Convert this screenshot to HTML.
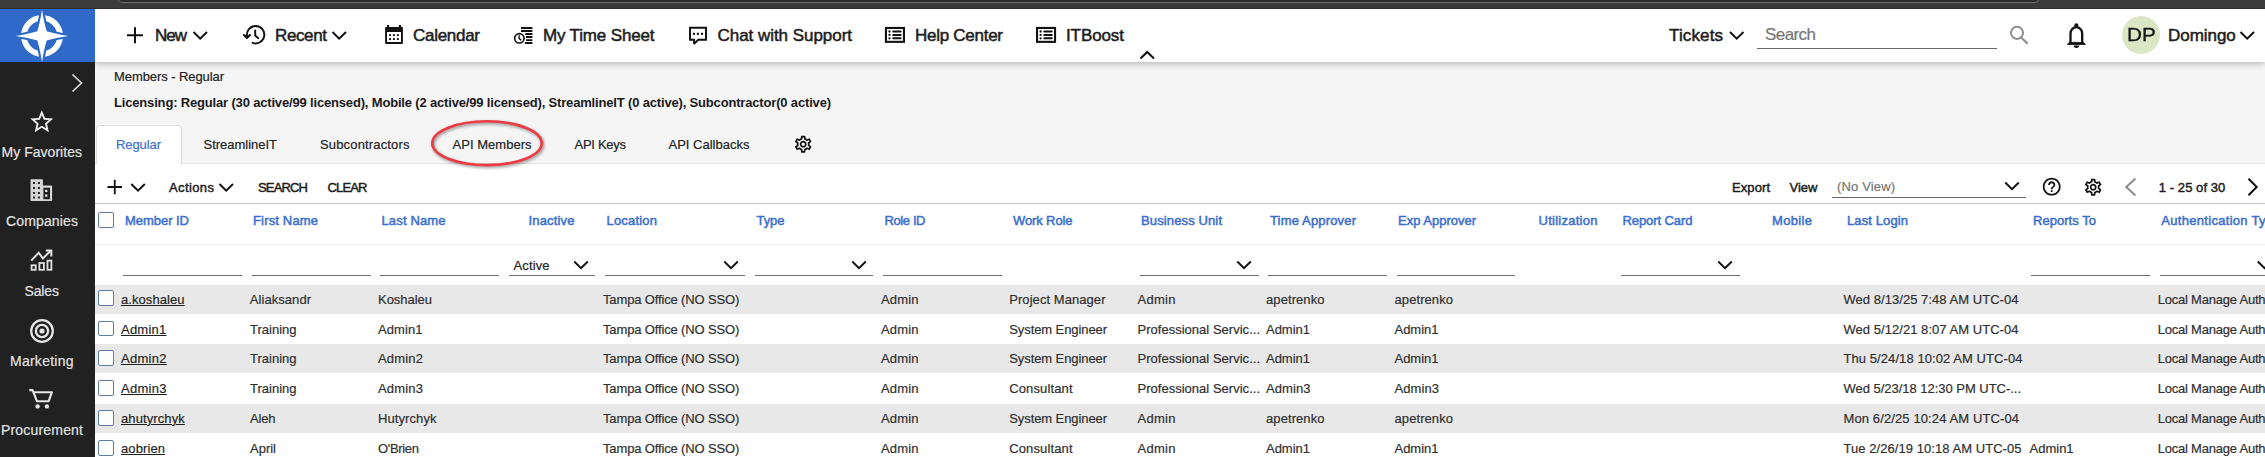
<!DOCTYPE html>
<html lang="en"><head><meta charset="utf-8"><title>Members - Regular</title>
<style>
*{box-sizing:border-box;margin:0;padding:0}
html,body{width:2265px;height:457px;overflow:hidden;background:#f5f5f5}
body{position:relative;font-family:"Liberation Sans",Arial,sans-serif;font-size:13px;color:#212121}
.a{position:absolute}
.t{position:absolute;white-space:nowrap;line-height:20px}
.browser{left:0;top:0;width:2265px;height:8.800px;background:#3b3b3b;border-bottom:1px solid #2e2e2e;z-index:5}
.urlbar{left:115.500px;top:-11.300px;width:1925px;height:14px;border:1.400px solid #6e6e6e;border-radius:10px;background:#2d2d2d;z-index:6}
.logo{left:0;top:8.800px;width:95px;height:53.200px;background:#2f6ac8}
.side{left:0;top:62px;width:95px;height:395px;background:#212121}
.hdr{left:95px;top:8.800px;width:2170px;height:53.200px;background:#fff;box-shadow:0 2px 6px rgba(0,0,0,.24)}
.tabline{left:95px;top:162.5px;width:2170px;height:1.5px;background:#e2e2e2}
.tab{left:95.7px;top:124.7px;width:86.200px;height:39.300px;background:#fff;border:1px solid #dcdcdc;border-bottom:0;border-radius:4px 4px 0 0}
.panel{left:95px;top:164px;width:2170px;height:293px;background:#fff}
.tbline{left:95px;top:203px;width:2170px;height:1px;background:#c4c4c4}
.hline{left:95px;top:244px;width:2170px;height:1px;background:#f0f0f0}
.row{left:95px;width:2170px;background:#e8e8e8}
.u{height:1px;background:#6e6e6e;top:274.6px}
.cb{width:15.6px;height:15.6px;left:98.3px;border:1.8px solid #5b7ea4;border-radius:2px;background:#fff}
svg{position:absolute;overflow:hidden}
.avatar{left:2122px;top:16px;width:38px;height:38px;border-radius:50%;background:#dbe7c4}
.sunder{left:1757px;top:47.500px;width:240px;height:1px;background:#666}
.vunder{left:1832px;top:196.500px;width:194px;height:1px;background:#666}

</style></head>
<body>
<div class="a browser"></div>
<div class="a urlbar"></div>
<div class="a panel"></div>
<div class="a tabline"></div>
<div class="a tab"></div>
<div class="a tbline"></div>
<div class="a hline"></div>
<div class="a row" style="top:284.6px;height:29.6px"></div>
<div class="a row" style="top:344px;height:29.2px"></div>
<div class="a row" style="top:403.6px;height:29.6px"></div>
<div class="a hdr"></div>
<div class="a side"></div>
<div class="a logo"></div>
<!-- logo -->
<svg style="left:0;top:8.500px" width="95" height="53.500" viewBox="0 8.500 95 53.500">
  <circle cx="42" cy="35.400" r="18.050" fill="none" stroke="#fff" stroke-width="5.700"/>
  <path d="M42.00 9.00Q43.90 21.90 46.70 30.70Q55.50 33.50 68.40 35.40Q55.50 37.30 46.70 40.10Q43.90 48.90 42.00 61.80Q40.10 48.90 37.30 40.10Q28.50 37.30 15.60 35.40Q28.50 33.50 37.30 30.70Q40.10 21.90 42.00 9.00Z" fill="#fff" stroke="#2f6ac8" stroke-width="4.200" stroke-linejoin="miter" paint-order="stroke"/>
</svg>
<!-- sidebar icons -->
<svg style="left:0;top:62px" width="95" height="395" viewBox="0 62 95 395" fill="none" stroke="#e6e6e6">
  <polyline points="72.5,74.5 81.5,83 72.5,91.5" stroke-width="1.7" stroke="#dcdcdc"/>
</svg>
<svg style="left:27.7px;top:107.6px" width="27.6" height="27.6" viewBox="0 0 24 24" fill="#f0f0f0"><path d="M22 9.24l-7.19-.62L12 2 9.19 8.63 2 9.24l5.46 4.73L5.82 21 12 17.27 18.18 21l-1.63-7.03L22 9.24zM12 15.4l-3.76 2.27 1-4.28-3.32-2.88 4.38-.38L12 6.1l1.71 4.04 4.38.38-3.32 2.88 1 4.28L12 15.4z"/></svg>
<svg style="left:0;top:170px" width="95" height="40" viewBox="0 170 95 40">
  <path d="M31.300 179.200H42.100Q42.900 179.200 42.900 180V185.500H51.300Q52.100 185.500 52.100 186.300V200.200Q52.100 201 51.300 201H31.300Q30.500 201 30.500 200.200V180Q30.500 179.200 31.300 179.200ZM43.400 187.700V199.200H50V187.700ZM33.05 182.00h2v2h-2ZM33.05 187.00h2v2h-2ZM33.05 191.90h2v2h-2ZM33.05 196.60h2v2h-2ZM37.90 182.00h2v2h-2ZM37.90 187.00h2v2h-2ZM37.90 191.90h2v2h-2ZM37.90 196.60h2v2h-2Z" fill="#d6d6d6" fill-rule="evenodd"/>
  <rect x="45.100" y="189.800" width="2.200" height="2.200" fill="#efefef"/><rect x="45.100" y="194.500" width="2.200" height="2.200" fill="#efefef"/>
</svg>
<!-- sales -->
<svg style="left:0;top:240px" width="95" height="40" viewBox="0 240 95 40" fill="none" stroke="#e2e2e2" stroke-width="1.800">
  <rect x="31.550" y="265.300" width="4.150" height="4.500"/><rect x="39.400" y="263" width="4.500" height="6.800"/><rect x="47.500" y="260.600" width="3.900" height="9.200"/>
  <polyline points="31.200,260.600 38.700,252.700 42.900,258.500 50.700,250.700" stroke-width="2" stroke-linejoin="miter"/>
  <polyline points="45.800,250.500 51.300,250.500 51.300,256.400" stroke-width="2.100"/>
</svg>
<!-- marketing -->
<svg style="left:29.5px;top:318.7px" width="24" height="24" viewBox="0 0 24 24" fill="none" stroke="#e6e6e6">
  <circle cx="12" cy="12" r="10.800" stroke-width="2.200"/><circle cx="12" cy="12" r="6.100" stroke-width="2.300"/><circle cx="12" cy="12" r="2.600" fill="#e6e6e6" stroke="none"/>
</svg>
<!-- cart -->
<svg style="left:0;top:380px" width="95" height="40" viewBox="0 380 95 40" fill="none" stroke="#e6e6e6" stroke-width="2.100">
  <path d="M29.3 390.1H32.6L36.9 401.2H48.7L51.9 392.2H33.6" stroke-linejoin="round"/>
  <circle cx="37.600" cy="406.400" r="2.200" fill="#e6e6e6" stroke="none"/><circle cx="46.900" cy="406.400" r="2.200" fill="#e6e6e6" stroke="none"/>
</svg>

<!-- header icons -->
<svg style="left:0;top:0" width="2265" height="62" viewBox="0 0 2265 62" fill="none" stroke="#111" stroke-width="2">
  <path d="M127 35.200H143M135 27.200V43.200" stroke-width="2"/>
  <polyline points="193.5,32 200.2,38.6 207,32"/>
  <polyline points="332.5,32 339.2,38.6 346,32"/>
  <polyline points="1730,32 1736.7,38.6 1743.5,32"/>
  <polyline points="2240.5,32 2247.2,38.6 2254,32"/>
  <polyline points="1140.5,58.5 1147.2,52 1154,58.5"/>
</svg>
<!-- header drawn icons -->
<svg style="left:0;top:0" width="2265" height="62" viewBox="0 0 2265 62" fill="none" stroke="#111" stroke-linecap="butt">
  <!-- history -->
  <path d="M246.980 35.900A8.700 8.700 0 1 1 252.620 42.880" stroke-width="1.950" stroke-linecap="round"/>
  <polyline points="244,34.900 247,37.900 250,34.900" stroke-width="2.100" stroke-linecap="round" stroke-linejoin="round"/>
  <polyline points="255.200,30.400 255.200,35.600 258.300,38.200" stroke-width="1.950" stroke-linecap="round" stroke-linejoin="round"/>
  <!-- calendar -->
  <path d="M385.1 27.7Q385.1 26.9 385.9 26.9H402.1Q402.9 26.900 402.9 27.700V43.200Q402.9 44 402.100 44H385.900Q385.100 44 385.100 43.200ZM387 32.100V42H401V32.100Z" fill="#111" stroke="none" fill-rule="evenodd"/>
  <path d="M388.1 25V28M400 25V28" stroke-width="2.200"/>
  <g fill="#111" stroke="none"><rect x="389.1" y="34.200" width="1.900" height="1.900"/><rect x="392.950" y="34.200" width="1.900" height="1.900"/><rect x="396.900" y="34.200" width="1.900" height="1.900"/>
  <rect x="389.1" y="38.100" width="1.900" height="1.900"/><rect x="392.950" y="38.100" width="1.900" height="1.900"/><rect x="396.900" y="38.100" width="1.900" height="1.900"/></g>
  <!-- time sheet -->
  <path d="M521 27.900H532.400M521 31H532.400M525.300 34H532.400M526 37H532.400M526.200 40.100H532.400M524.900 43H532.400" stroke-width="1.950"/>
  <circle cx="519.350" cy="38.300" r="4.700" stroke-width="1.650" fill="#fff"/>
  <polyline points="519.100,35.800 519.100,38.500 520.800,39.900" stroke-width="1.400" stroke-linecap="round"/>
  <!-- chat -->
  <path d="M690 27.830H706V39.770H698.300L694.100 43.900V39.770H690Z" stroke-width="1.950" stroke-linejoin="miter" stroke-miterlimit="2"/>
  <g fill="#111" stroke="none"><rect x="692.950" y="32.750" width="2.100" height="2.100"/><rect x="696.850" y="32.750" width="2.100" height="2.100"/><rect x="700.950" y="32.750" width="2.100" height="2.100"/></g>
  <!-- help center -->
  <g>
  <rect x="885.950" y="27.950" width="18" height="13.900" stroke-width="2.100"/>
  <path d="M893.200 31.500H900.650M893.200 34.950H900.650M893.200 38.300H900.650" stroke-width="2" stroke-linecap="round"/>
  <g fill="#111" stroke="none"><circle cx="889.500" cy="31.500" r="1.150"/><circle cx="889.500" cy="34.950" r="1.150"/><circle cx="889.500" cy="38.300" r="1.150"/></g>
  </g>
  <g transform="translate(151.100 0)">
  <rect x="885.950" y="27.950" width="18" height="13.900" stroke-width="2.100"/>
  <path d="M893.200 31.500H900.650M893.200 34.950H900.650M893.200 38.300H900.650" stroke-width="2" stroke-linecap="round"/>
  <g fill="#111" stroke="none"><circle cx="889.500" cy="31.500" r="1.150"/><circle cx="889.500" cy="34.950" r="1.150"/><circle cx="889.500" cy="38.300" r="1.150"/></g>
  </g>
  
  <!-- search magnifier -->
  <circle cx="2017" cy="32.850" r="6.050" stroke="#8c8c8c" stroke-width="1.950"/>
  <path d="M2021.500 37.800L2027.200 43.300" stroke="#8c8c8c" stroke-width="2" stroke-linecap="round"/>
  <!-- bell -->
  <path d="M2070.500 43V33.700A5.850 6.500 0 0 1 2082.200 33.700V43" stroke-width="2.300"/>
  <path d="M2067.300 44.400L2069.400 42.400H2083.300L2085.400 44.400Z" fill="#111" stroke-width="0.900" stroke-linejoin="round"/>
  <circle cx="2076.350" cy="25.400" r="2.050" fill="#111" stroke="none"/>
  <path d="M2073.500 45.600A2.850 2.500 0 0 0 2079.200 45.600Z" fill="#111" stroke="none"/>
</svg>
<div class="a sunder"></div>
<div class="a avatar"></div>

<!-- tabs gear -->
<svg style="left:792.800px;top:134px" width="20.400" height="20.400" viewBox="0 0 24 24" fill="#111"><path d="M19.430 12.980c.04-.32.070-.64.070-.98 0-.34-.03-.66-.07-.98l2.110-1.650c.19-.15.240-.42.120-.64l-2-3.460c-.09-.16-.26-.25-.44-.25-.06 0-.12.010-.17.030l-2.490 1c-.52-.4-1.080-.73-1.690-.98l-.38-2.650C14.460 2.180 14.250 2 14 2h-4c-.25 0-.46.180-.49.420l-.38 2.650c-.61.250-1.170.59-1.690.98l-2.490-1c-.06-.02-.12-.03-.18-.03-.17 0-.34.090-.43.250l-2 3.460c-.13.220-.07.490.12.640l2.110 1.650c-.04.320-.07.650-.07.980 0 .33.030.66.070.98l-2.110 1.650c-.19.150-.24.420-.12.640l2 3.460c.09.160.26.250.44.250.06 0 .12-.01.170-.03l2.490-1c.52.400 1.080.73 1.690.98l.38 2.650c.03.240.24.420.49.420h4c.25 0 .46-.18.490-.42l.38-2.650c.61-.25 1.170-.59 1.690-.98l2.490 1c.06.020.12.030.18.030.17 0 .34-.09.430-.25l2-3.460c.12-.22.070-.49-.12-.64l-2.110-1.650zm-1.980-1.710c.04.310.05.520.05.730 0 .21-.02.430-.05.730l-.14 1.130.89.700 1.080.84-.7 1.210-1.270-.51-1.040-.42-.9.680c-.43.320-.84.560-1.250.73l-1.060.43-.16 1.130-.2 1.350h-1.400l-.19-1.350-.16-1.130-1.060-.43c-.43-.18-.83-.41-1.230-.71l-.91-.7-1.060.43-1.270.51-.7-1.210 1.080-.84.890-.7-.14-1.130c-.03-.31-.05-.54-.05-.74s.02-.43.050-.73l.14-1.130-.89-.7-1.080-.84.700-1.210 1.270.51 1.040.42.900-.68c.43-.32.840-.56 1.250-.73l1.060-.43.160-1.130.2-1.350h1.390l.19 1.350.16 1.130 1.060.43c.43.180.83.410 1.230.71l.91.700 1.060-.43 1.270-.51.700 1.210-1.070.85-.89.700.14 1.130zM12 8c-2.210 0-4 1.790-4 4s1.790 4 4 4 4-1.790 4-4-1.790-4-4-4zm0 6c-1.100 0-2-.9-2-2s.9-2 2-2 2 .9 2 2-.9 2-2 2z"/></svg>
<!-- red ellipse -->
<svg style="left:420px;top:110px" width="135" height="68" viewBox="420 110 135 68" fill="none">
  <ellipse cx="488.100" cy="144.800" rx="54.700" ry="21.900" stroke="rgba(0,0,0,.42)" stroke-width="2.800" style="filter:blur(1.600px)"/>
  <ellipse cx="487" cy="143.200" rx="54.700" ry="21.900" stroke="#ee3a42" stroke-width="2.600"/>
</svg>

<!-- toolbar icons -->
<svg style="left:95px;top:164px" width="2170" height="40" viewBox="95 164 2170 40" fill="none" stroke="#111" stroke-width="1.950">
  <path d="M107.500 187H122M114.750 179.700V194.300" stroke-width="1.800"/>
  <polyline points="131.300,184 138,190.600 144.800,184"/>
  <polyline points="219.500,184 226.200,190.600 233,184"/>
  <polyline points="2005.300,182.500 2012,189.100 2018.800,182.500"/>
  <polyline points="2135.400,178.600 2126.300,187 2135.400,195.400" stroke="#8c8c8c" stroke-width="2"/>
  <polyline points="2248.500,178.800 2256.700,187 2248.500,195.200" stroke-width="2"/>
</svg>
<div class="a vunder"></div>
<svg style="left:2041.100px;top:175.900px" width="21.400" height="21.400" viewBox="0 0 24 24" fill="#111"><path d="M11 18h2v-2h-2v2zm1-16C6.480 2 2 6.480 2 12s4.480 10 10 10 10-4.480 10-10S17.520 2 12 2zm0 18c-4.410 0-8-3.590-8-8s3.590-8 8-8 8 3.590 8 8-3.590 8-8 8zm0-14c-2.210 0-4 1.790-4 4h2c0-1.100.9-2 2-2s2 .9 2 2c0 2-3 1.750-3 5h2c0-2.250 3-2.500 3-5 0-2.210-1.790-4-4-4z"/></svg>
<svg style="left:2082.800px;top:176.900px" width="20.400" height="20.400" viewBox="0 0 24 24" fill="#111"><path d="M19.430 12.980c.04-.32.070-.64.070-.98 0-.34-.03-.66-.07-.98l2.110-1.650c.19-.15.240-.42.120-.64l-2-3.460c-.09-.16-.26-.25-.44-.25-.06 0-.12.010-.17.030l-2.490 1c-.52-.4-1.080-.73-1.690-.98l-.38-2.650C14.460 2.180 14.250 2 14 2h-4c-.25 0-.46.180-.49.420l-.38 2.650c-.61.250-1.170.59-1.690.98l-2.490-1c-.06-.02-.12-.03-.18-.03-.17 0-.34.090-.43.250l-2 3.460c-.13.220-.07.490.12.640l2.110 1.650c-.04.320-.07.650-.07.980 0 .33.030.66.070.98l-2.110 1.650c-.19.150-.24.420-.12.640l2 3.460c.09.160.26.250.44.250.06 0 .12-.01.170-.03l2.490-1c.52.400 1.080.73 1.690.98l.38 2.650c.03.240.24.420.49.420h4c.25 0 .46-.18.490-.42l.38-2.650c.61-.25 1.170-.59 1.690-.98l2.490 1c.06.020.12.030.18.030.17 0 .34-.09.430-.25l2-3.460c.12-.22.070-.49-.12-.64l-2.110-1.650zm-1.980-1.710c.04.310.05.520.05.730 0 .21-.02.430-.05.730l-.14 1.130.89.700 1.080.84-.7 1.210-1.270-.51-1.040-.42-.9.680c-.43.320-.84.560-1.250.73l-1.060.43-.16 1.130-.2 1.350h-1.400l-.19-1.350-.16-1.130-1.060-.43c-.43-.18-.83-.41-1.230-.71l-.91-.7-1.060.43-1.270.51-.7-1.210 1.080-.84.890-.7-.14-1.130c-.03-.31-.05-.54-.05-.74s.02-.43.050-.73l.14-1.130-.89-.7-1.080-.84.700-1.210 1.270.51 1.040.42.900-.68c.43-.32.840-.56 1.250-.73l1.060-.43.160-1.130.2-1.350h1.390l.19 1.350.16 1.130 1.060.43c.43.180.83.410 1.230.71l.91.700 1.060-.43 1.270-.51.700 1.210-1.070.85-.89.700.14 1.130zM12 8c-2.210 0-4 1.790-4 4s1.790 4 4 4 4-1.790 4-4-1.790-4-4-4zm0 6c-1.100 0-2-.9-2-2s.9-2 2-2 2 .9 2 2-.9 2-2 2z"/></svg>

<!-- filter underlines -->
<div class="a u" style="left:123px;width:119px"></div>
<div class="a u" style="left:252px;width:119px"></div>
<div class="a u" style="left:380px;width:119px"></div>
<div class="a u" style="left:509px;width:86px"></div>
<div class="a u" style="left:605px;width:140px"></div>
<div class="a u" style="left:755px;width:118px"></div>
<div class="a u" style="left:883px;width:119px"></div>
<div class="a u" style="left:1140px;width:119px"></div>
<div class="a u" style="left:1268px;width:119px"></div>
<div class="a u" style="left:1397px;width:118px"></div>
<div class="a u" style="left:1621px;width:119px"></div>
<div class="a u" style="left:2031px;width:119px"></div>
<div class="a u" style="left:2159.800px;width:106px"></div>
<svg style="left:95px;top:245px" width="2170" height="40" viewBox="95 245 2170 40" fill="none" stroke="#111" stroke-width="1.950">
  <polyline points="574.300,261.500 581,268.100 587.800,261.500"/>
  <polyline points="724.300,261.500 731,268.100 737.800,261.500"/>
  <polyline points="852.300,261.500 859,268.100 865.800,261.500"/>
  <polyline points="1237.300,261.500 1244,268.100 1250.800,261.500"/>
  <polyline points="1718.300,261.500 1725,268.100 1731.800,261.500"/>
  <polyline points="2257.800,261.500 2264.500,268.100 2271.300,261.500"/>
  <path d="M1735 205.500H1743.200V212.500Z" fill="#8d9db3" stroke="none"/>
</svg>
<!-- checkboxes -->
<div class="a cb" style="top:212.400px"></div>
<div class="a cb" style="top:290.300px"></div>
<div class="a cb" style="top:320.500px"></div>
<div class="a cb" style="top:350.200px"></div>
<div class="a cb" style="top:380.400px"></div>
<div class="a cb" style="top:410.300px"></div>
<div class="a cb" style="top:440px"></div>
<span class="t" style="left:155.00px;top:25.50px;font-size:17px;color:#1c1c1c;-webkit-text-stroke:0.5px #1c1c1c;letter-spacing:-1.008px;">New</span>
<span class="t" style="left:275.00px;top:25.50px;font-size:17px;color:#1c1c1c;-webkit-text-stroke:0.5px #1c1c1c;letter-spacing:-0.375px;">Recent</span>
<span class="t" style="left:413.00px;top:25.50px;font-size:17px;color:#1c1c1c;-webkit-text-stroke:0.5px #1c1c1c;letter-spacing:-0.286px;">Calendar</span>
<span class="t" style="left:543.00px;top:25.50px;font-size:17px;color:#1c1c1c;-webkit-text-stroke:0.5px #1c1c1c;letter-spacing:-0.156px;">My Time Sheet</span>
<span class="t" style="left:717.50px;top:25.50px;font-size:17px;color:#1c1c1c;-webkit-text-stroke:0.5px #1c1c1c;letter-spacing:-0.040px;">Chat with Support</span>
<span class="t" style="left:915.00px;top:25.50px;font-size:17px;color:#1c1c1c;-webkit-text-stroke:0.5px #1c1c1c;letter-spacing:-0.272px;">Help Center</span>
<span class="t" style="left:1066.00px;top:25.50px;font-size:17px;color:#1c1c1c;-webkit-text-stroke:0.5px #1c1c1c;letter-spacing:-0.099px;">ITBoost</span>
<span class="t" style="left:1669.00px;top:25.50px;font-size:17px;color:#1c1c1c;-webkit-text-stroke:0.5px #1c1c1c;letter-spacing:0.130px;">Tickets</span>
<span class="t" style="left:1765.00px;top:24.50px;font-size:17px;color:#757575;-webkit-text-stroke:0.18px #757575;letter-spacing:-0.575px;">Search</span>
<span class="t" style="left:2127.30px;top:25.00px;font-size:18px;color:#161616;-webkit-text-stroke:0.3px #161616;transform:scaleX(1.1488);transform-origin:0 0;">DP</span>
<span class="t" style="left:2168.00px;top:25.50px;font-size:17px;color:#1c1c1c;-webkit-text-stroke:0.5px #1c1c1c;letter-spacing:-0.049px;">Domingo</span>
<span class="t" style="left:114.00px;top:66.50px;font-size:13px;color:#212121;-webkit-text-stroke:0.18px #212121;letter-spacing:-0.079px;">Members - Regular</span>
<span class="t" style="left:114.00px;top:92.50px;font-size:13px;color:#1a1a1a;font-weight:bold;letter-spacing:-0.169px;">Licensing: Regular (30 active/99 licensed), Mobile (2 active/99 licensed), StreamlineIT (0 active), Subcontractor(0 active)</span>
<span class="t" style="left:116.00px;top:134.50px;font-size:13px;color:#3b6fcf;-webkit-text-stroke:0.18px #3b6fcf;letter-spacing:-0.089px;">Regular</span>
<span class="t" style="left:203.50px;top:134.50px;font-size:13px;color:#212121;-webkit-text-stroke:0.18px #212121;letter-spacing:-0.018px;">StreamlineIT</span>
<span class="t" style="left:320.00px;top:134.50px;font-size:13px;color:#212121;-webkit-text-stroke:0.18px #212121;letter-spacing:0.159px;">Subcontractors</span>
<span class="t" style="left:452.50px;top:134.50px;font-size:13px;color:#212121;-webkit-text-stroke:0.18px #212121;letter-spacing:0.025px;">API Members</span>
<span class="t" style="left:574.50px;top:134.50px;font-size:13px;color:#212121;-webkit-text-stroke:0.18px #212121;letter-spacing:-0.281px;">API Keys</span>
<span class="t" style="left:668.50px;top:134.50px;font-size:13px;color:#212121;-webkit-text-stroke:0.18px #212121;letter-spacing:0.007px;">API Callbacks</span>
<span class="t" style="left:169.00px;top:177.50px;font-size:13px;color:#1c1c1c;-webkit-text-stroke:0.45px #1c1c1c;letter-spacing:0.393px;">Actions</span>
<span class="t" style="left:258.00px;top:177.50px;font-size:13px;color:#1c1c1c;-webkit-text-stroke:0.45px #1c1c1c;letter-spacing:-0.838px;">SEARCH</span>
<span class="t" style="left:327.50px;top:177.50px;font-size:13px;color:#1c1c1c;-webkit-text-stroke:0.45px #1c1c1c;letter-spacing:-0.840px;">CLEAR</span>
<span class="t" style="left:1732.00px;top:177.50px;font-size:13px;color:#1c1c1c;-webkit-text-stroke:0.45px #1c1c1c;letter-spacing:0.084px;">Export</span>
<span class="t" style="left:1789.50px;top:177.50px;font-size:13px;color:#1c1c1c;-webkit-text-stroke:0.45px #1c1c1c;letter-spacing:0.016px;">View</span>
<span class="t" style="left:2158.80px;top:177.50px;font-size:13px;color:#1c1c1c;-webkit-text-stroke:0.45px #1c1c1c;letter-spacing:0.065px;">1 - 25 of 30</span>
<span class="t" style="left:1837.00px;top:176.50px;font-size:13px;color:#757575;-webkit-text-stroke:0.18px #757575;letter-spacing:0.145px;">(No View)</span>
<span class="t" style="left:125.00px;top:210.50px;font-size:13px;color:#3b6fcf;-webkit-text-stroke:0.5px #3b6fcf;letter-spacing:-0.037px;">Member ID</span>
<span class="t" style="left:253.00px;top:210.50px;font-size:13px;color:#3b6fcf;-webkit-text-stroke:0.5px #3b6fcf;letter-spacing:0.160px;">First Name</span>
<span class="t" style="left:381.50px;top:210.50px;font-size:13px;color:#3b6fcf;-webkit-text-stroke:0.5px #3b6fcf;letter-spacing:0.141px;">Last Name</span>
<span class="t" style="left:528.50px;top:210.50px;font-size:13px;color:#3b6fcf;-webkit-text-stroke:0.5px #3b6fcf;letter-spacing:0.170px;">Inactive</span>
<span class="t" style="left:606.50px;top:210.50px;font-size:13px;color:#3b6fcf;-webkit-text-stroke:0.5px #3b6fcf;letter-spacing:0.192px;">Location</span>
<span class="t" style="left:756.50px;top:210.50px;font-size:13px;color:#3b6fcf;-webkit-text-stroke:0.5px #3b6fcf;letter-spacing:-0.062px;">Type</span>
<span class="t" style="left:884.50px;top:210.50px;font-size:13px;color:#3b6fcf;-webkit-text-stroke:0.5px #3b6fcf;letter-spacing:-0.393px;">Role ID</span>
<span class="t" style="left:1013.00px;top:210.50px;font-size:13px;color:#3b6fcf;-webkit-text-stroke:0.5px #3b6fcf;letter-spacing:-0.119px;">Work Role</span>
<span class="t" style="left:1141.00px;top:210.50px;font-size:13px;color:#3b6fcf;-webkit-text-stroke:0.5px #3b6fcf;letter-spacing:0.126px;">Business Unit</span>
<span class="t" style="left:1270.00px;top:210.50px;font-size:13px;color:#3b6fcf;-webkit-text-stroke:0.5px #3b6fcf;letter-spacing:0.161px;">Time Approver</span>
<span class="t" style="left:1398.00px;top:210.50px;font-size:13px;color:#3b6fcf;-webkit-text-stroke:0.5px #3b6fcf;letter-spacing:-0.004px;">Exp Approver</span>
<span class="t" style="left:1538.50px;top:210.50px;font-size:13px;color:#3b6fcf;-webkit-text-stroke:0.5px #3b6fcf;letter-spacing:0.264px;">Utilization</span>
<span class="t" style="left:1622.50px;top:210.50px;font-size:13px;color:#3b6fcf;-webkit-text-stroke:0.5px #3b6fcf;letter-spacing:-0.081px;">Report Card</span>
<span class="t" style="left:1772.00px;top:210.50px;font-size:13px;color:#3b6fcf;-webkit-text-stroke:0.5px #3b6fcf;letter-spacing:0.341px;">Mobile</span>
<span class="t" style="left:1847.00px;top:210.50px;font-size:13px;color:#3b6fcf;-webkit-text-stroke:0.5px #3b6fcf;letter-spacing:0.111px;">Last Login</span>
<span class="t" style="left:2033.00px;top:210.50px;font-size:13px;color:#3b6fcf;-webkit-text-stroke:0.5px #3b6fcf;letter-spacing:0.040px;">Reports To</span>
<span class="t" style="left:2161.30px;top:210.50px;font-size:13px;color:#3b6fcf;-webkit-text-stroke:0.5px #3b6fcf;letter-spacing:0.300px;">Authentication Type</span>
<span class="t" style="left:513.50px;top:255.50px;font-size:13px;color:#212121;-webkit-text-stroke:0.18px #212121;letter-spacing:0.119px;">Active</span>
<span class="t" style="left:1.50px;top:142.00px;font-size:14px;color:#e4e4e4;-webkit-text-stroke:0.18px #e4e4e4;letter-spacing:0.034px;">My Favorites</span>
<span class="t" style="left:6.00px;top:211.00px;font-size:14px;color:#e4e4e4;-webkit-text-stroke:0.18px #e4e4e4;letter-spacing:0.146px;">Companies</span>
<span class="t" style="left:24.50px;top:281.00px;font-size:14px;color:#e4e4e4;-webkit-text-stroke:0.18px #e4e4e4;letter-spacing:-0.133px;">Sales</span>
<span class="t" style="left:10.00px;top:351.00px;font-size:14px;color:#e4e4e4;-webkit-text-stroke:0.18px #e4e4e4;letter-spacing:0.254px;">Marketing</span>
<span class="t" style="left:1.00px;top:420.00px;font-size:14px;color:#e4e4e4;-webkit-text-stroke:0.18px #e4e4e4;letter-spacing:0.184px;">Procurement</span>
<span class="t" style="left:121.00px;top:289.50px;font-size:13px;color:#1f1f1f;-webkit-text-stroke:0.18px #1f1f1f;letter-spacing:0.068px;text-decoration:underline;text-underline-offset:1px;">a.koshaleu</span>
<span class="t" style="left:249.75px;top:289.50px;font-size:13px;color:#2e2e2e;-webkit-text-stroke:0.18px #2e2e2e;letter-spacing:0.061px;">Aliaksandr</span>
<span class="t" style="left:378.00px;top:289.50px;font-size:13px;color:#2e2e2e;-webkit-text-stroke:0.18px #2e2e2e;letter-spacing:-0.031px;">Koshaleu</span>
<span class="t" style="left:603.00px;top:289.50px;font-size:13px;color:#2e2e2e;-webkit-text-stroke:0.18px #2e2e2e;letter-spacing:-0.144px;">Tampa Office (NO SSO)</span>
<span class="t" style="left:881.00px;top:289.50px;font-size:13px;color:#2e2e2e;-webkit-text-stroke:0.18px #2e2e2e;letter-spacing:0.160px;">Admin</span>
<span class="t" style="left:1009.25px;top:289.50px;font-size:13px;color:#2e2e2e;-webkit-text-stroke:0.18px #2e2e2e;letter-spacing:0.061px;">Project Manager</span>
<span class="t" style="left:1137.50px;top:289.50px;font-size:13px;color:#2e2e2e;-webkit-text-stroke:0.18px #2e2e2e;letter-spacing:0.285px;">Admin</span>
<span class="t" style="left:1266.00px;top:289.50px;font-size:13px;color:#2e2e2e;-webkit-text-stroke:0.18px #2e2e2e;letter-spacing:0.084px;">apetrenko</span>
<span class="t" style="left:1394.50px;top:289.50px;font-size:13px;color:#2e2e2e;-webkit-text-stroke:0.18px #2e2e2e;letter-spacing:0.084px;">apetrenko</span>
<span class="t" style="left:1843.50px;top:289.50px;font-size:13px;color:#2e2e2e;-webkit-text-stroke:0.18px #2e2e2e;letter-spacing:0.043px;">Wed 8/13/25 7:48 AM UTC-04</span>
<span class="t" style="left:2157.70px;top:289.50px;font-size:13px;color:#2e2e2e;-webkit-text-stroke:0.18px #2e2e2e;letter-spacing:-0.212px;">Local Manage Authentication</span>
<span class="t" style="left:121.00px;top:319.50px;font-size:13px;color:#1f1f1f;-webkit-text-stroke:0.18px #1f1f1f;letter-spacing:0.234px;text-decoration:underline;text-underline-offset:1px;">Admin1</span>
<span class="t" style="left:250.00px;top:319.50px;font-size:13px;color:#2e2e2e;-webkit-text-stroke:0.18px #2e2e2e;letter-spacing:0.002px;">Training</span>
<span class="t" style="left:378.00px;top:319.50px;font-size:13px;color:#2e2e2e;-webkit-text-stroke:0.18px #2e2e2e;letter-spacing:0.084px;">Admin1</span>
<span class="t" style="left:603.00px;top:319.50px;font-size:13px;color:#2e2e2e;-webkit-text-stroke:0.18px #2e2e2e;letter-spacing:-0.144px;">Tampa Office (NO SSO)</span>
<span class="t" style="left:881.00px;top:319.50px;font-size:13px;color:#2e2e2e;-webkit-text-stroke:0.18px #2e2e2e;letter-spacing:0.160px;">Admin</span>
<span class="t" style="left:1009.25px;top:319.50px;font-size:13px;color:#2e2e2e;-webkit-text-stroke:0.18px #2e2e2e;letter-spacing:-0.089px;">System Engineer</span>
<span class="t" style="left:1137.50px;top:319.50px;font-size:13px;color:#2e2e2e;-webkit-text-stroke:0.18px #2e2e2e;letter-spacing:0.019px;">Professional Servic...</span>
<span class="t" style="left:1266.00px;top:319.50px;font-size:13px;color:#2e2e2e;-webkit-text-stroke:0.18px #2e2e2e;letter-spacing:-0.016px;">Admin1</span>
<span class="t" style="left:1394.50px;top:319.50px;font-size:13px;color:#2e2e2e;-webkit-text-stroke:0.18px #2e2e2e;letter-spacing:-0.016px;">Admin1</span>
<span class="t" style="left:1843.50px;top:319.50px;font-size:13px;color:#2e2e2e;-webkit-text-stroke:0.18px #2e2e2e;letter-spacing:0.043px;">Wed 5/12/21 8:07 AM UTC-04</span>
<span class="t" style="left:2157.70px;top:319.50px;font-size:13px;color:#2e2e2e;-webkit-text-stroke:0.18px #2e2e2e;letter-spacing:-0.212px;">Local Manage Authentication</span>
<span class="t" style="left:121.00px;top:348.50px;font-size:13px;color:#1f1f1f;-webkit-text-stroke:0.18px #1f1f1f;letter-spacing:0.284px;text-decoration:underline;text-underline-offset:1px;">Admin2</span>
<span class="t" style="left:250.00px;top:348.50px;font-size:13px;color:#2e2e2e;-webkit-text-stroke:0.18px #2e2e2e;letter-spacing:0.002px;">Training</span>
<span class="t" style="left:378.00px;top:348.50px;font-size:13px;color:#2e2e2e;-webkit-text-stroke:0.18px #2e2e2e;letter-spacing:0.184px;">Admin2</span>
<span class="t" style="left:603.00px;top:348.50px;font-size:13px;color:#2e2e2e;-webkit-text-stroke:0.18px #2e2e2e;letter-spacing:-0.144px;">Tampa Office (NO SSO)</span>
<span class="t" style="left:881.00px;top:348.50px;font-size:13px;color:#2e2e2e;-webkit-text-stroke:0.18px #2e2e2e;letter-spacing:0.160px;">Admin</span>
<span class="t" style="left:1009.25px;top:348.50px;font-size:13px;color:#2e2e2e;-webkit-text-stroke:0.18px #2e2e2e;letter-spacing:-0.089px;">System Engineer</span>
<span class="t" style="left:1137.50px;top:348.50px;font-size:13px;color:#2e2e2e;-webkit-text-stroke:0.18px #2e2e2e;letter-spacing:0.019px;">Professional Servic...</span>
<span class="t" style="left:1266.00px;top:348.50px;font-size:13px;color:#2e2e2e;-webkit-text-stroke:0.18px #2e2e2e;letter-spacing:-0.016px;">Admin1</span>
<span class="t" style="left:1394.50px;top:348.50px;font-size:13px;color:#2e2e2e;-webkit-text-stroke:0.18px #2e2e2e;letter-spacing:-0.016px;">Admin1</span>
<span class="t" style="left:1843.50px;top:348.50px;font-size:13px;color:#2e2e2e;-webkit-text-stroke:0.18px #2e2e2e;letter-spacing:0.075px;">Thu 5/24/18 10:02 AM UTC-04</span>
<span class="t" style="left:2157.70px;top:348.50px;font-size:13px;color:#2e2e2e;-webkit-text-stroke:0.18px #2e2e2e;letter-spacing:-0.212px;">Local Manage Authentication</span>
<span class="t" style="left:121.00px;top:378.50px;font-size:13px;color:#1f1f1f;-webkit-text-stroke:0.18px #1f1f1f;letter-spacing:0.284px;text-decoration:underline;text-underline-offset:1px;">Admin3</span>
<span class="t" style="left:250.00px;top:378.50px;font-size:13px;color:#2e2e2e;-webkit-text-stroke:0.18px #2e2e2e;letter-spacing:0.002px;">Training</span>
<span class="t" style="left:378.00px;top:378.50px;font-size:13px;color:#2e2e2e;-webkit-text-stroke:0.18px #2e2e2e;letter-spacing:0.184px;">Admin3</span>
<span class="t" style="left:603.00px;top:378.50px;font-size:13px;color:#2e2e2e;-webkit-text-stroke:0.18px #2e2e2e;letter-spacing:-0.144px;">Tampa Office (NO SSO)</span>
<span class="t" style="left:881.00px;top:378.50px;font-size:13px;color:#2e2e2e;-webkit-text-stroke:0.18px #2e2e2e;letter-spacing:0.160px;">Admin</span>
<span class="t" style="left:1009.25px;top:378.50px;font-size:13px;color:#2e2e2e;-webkit-text-stroke:0.18px #2e2e2e;letter-spacing:0.122px;">Consultant</span>
<span class="t" style="left:1137.50px;top:378.50px;font-size:13px;color:#2e2e2e;-webkit-text-stroke:0.18px #2e2e2e;letter-spacing:0.019px;">Professional Servic...</span>
<span class="t" style="left:1266.00px;top:378.50px;font-size:13px;color:#2e2e2e;-webkit-text-stroke:0.18px #2e2e2e;letter-spacing:0.084px;">Admin3</span>
<span class="t" style="left:1394.50px;top:378.50px;font-size:13px;color:#2e2e2e;-webkit-text-stroke:0.18px #2e2e2e;letter-spacing:0.084px;">Admin3</span>
<span class="t" style="left:1843.50px;top:378.50px;font-size:13px;color:#2e2e2e;-webkit-text-stroke:0.18px #2e2e2e;letter-spacing:-0.027px;">Wed 5/23/18 12:30 PM UTC-...</span>
<span class="t" style="left:2157.70px;top:378.50px;font-size:13px;color:#2e2e2e;-webkit-text-stroke:0.18px #2e2e2e;letter-spacing:-0.212px;">Local Manage Authentication</span>
<span class="t" style="left:121.00px;top:408.50px;font-size:13px;color:#1f1f1f;-webkit-text-stroke:0.18px #1f1f1f;letter-spacing:0.097px;text-decoration:underline;text-underline-offset:1px;">ahutyrchyk</span>
<span class="t" style="left:250.00px;top:408.50px;font-size:13px;color:#2e2e2e;-webkit-text-stroke:0.18px #2e2e2e;letter-spacing:-0.177px;">Aleh</span>
<span class="t" style="left:378.00px;top:408.50px;font-size:13px;color:#2e2e2e;-webkit-text-stroke:0.18px #2e2e2e;letter-spacing:0.088px;">Hutyrchyk</span>
<span class="t" style="left:603.00px;top:408.50px;font-size:13px;color:#2e2e2e;-webkit-text-stroke:0.18px #2e2e2e;letter-spacing:-0.144px;">Tampa Office (NO SSO)</span>
<span class="t" style="left:881.00px;top:408.50px;font-size:13px;color:#2e2e2e;-webkit-text-stroke:0.18px #2e2e2e;letter-spacing:0.160px;">Admin</span>
<span class="t" style="left:1009.25px;top:408.50px;font-size:13px;color:#2e2e2e;-webkit-text-stroke:0.18px #2e2e2e;letter-spacing:-0.089px;">System Engineer</span>
<span class="t" style="left:1137.50px;top:408.50px;font-size:13px;color:#2e2e2e;-webkit-text-stroke:0.18px #2e2e2e;letter-spacing:0.285px;">Admin</span>
<span class="t" style="left:1266.00px;top:408.50px;font-size:13px;color:#2e2e2e;-webkit-text-stroke:0.18px #2e2e2e;letter-spacing:0.084px;">apetrenko</span>
<span class="t" style="left:1394.50px;top:408.50px;font-size:13px;color:#2e2e2e;-webkit-text-stroke:0.18px #2e2e2e;letter-spacing:0.084px;">apetrenko</span>
<span class="t" style="left:1843.50px;top:408.50px;font-size:13px;color:#2e2e2e;-webkit-text-stroke:0.18px #2e2e2e;letter-spacing:0.112px;">Mon 6/2/25 10:24 AM UTC-04</span>
<span class="t" style="left:2157.70px;top:408.50px;font-size:13px;color:#2e2e2e;-webkit-text-stroke:0.18px #2e2e2e;letter-spacing:-0.212px;">Local Manage Authentication</span>
<span class="t" style="left:121.00px;top:438.50px;font-size:13px;color:#1f1f1f;-webkit-text-stroke:0.18px #1f1f1f;letter-spacing:0.104px;text-decoration:underline;text-underline-offset:1px;">aobrien</span>
<span class="t" style="left:250.00px;top:438.50px;font-size:13px;color:#2e2e2e;-webkit-text-stroke:0.18px #2e2e2e;letter-spacing:-0.004px;">April</span>
<span class="t" style="left:378.00px;top:438.50px;font-size:13px;color:#2e2e2e;-webkit-text-stroke:0.18px #2e2e2e;letter-spacing:-0.326px;">O'Brien</span>
<span class="t" style="left:603.00px;top:438.50px;font-size:13px;color:#2e2e2e;-webkit-text-stroke:0.18px #2e2e2e;letter-spacing:-0.144px;">Tampa Office (NO SSO)</span>
<span class="t" style="left:881.00px;top:438.50px;font-size:13px;color:#2e2e2e;-webkit-text-stroke:0.18px #2e2e2e;letter-spacing:0.160px;">Admin</span>
<span class="t" style="left:1009.25px;top:438.50px;font-size:13px;color:#2e2e2e;-webkit-text-stroke:0.18px #2e2e2e;letter-spacing:0.122px;">Consultant</span>
<span class="t" style="left:1137.50px;top:438.50px;font-size:13px;color:#2e2e2e;-webkit-text-stroke:0.18px #2e2e2e;letter-spacing:0.285px;">Admin</span>
<span class="t" style="left:1266.00px;top:438.50px;font-size:13px;color:#2e2e2e;-webkit-text-stroke:0.18px #2e2e2e;letter-spacing:-0.016px;">Admin1</span>
<span class="t" style="left:1394.50px;top:438.50px;font-size:13px;color:#2e2e2e;-webkit-text-stroke:0.18px #2e2e2e;letter-spacing:-0.016px;">Admin1</span>
<span class="t" style="left:1843.50px;top:438.50px;font-size:13px;color:#2e2e2e;-webkit-text-stroke:0.18px #2e2e2e;letter-spacing:0.055px;">Tue 2/26/19 10:18 AM UTC-05</span>
<span class="t" style="left:2029.50px;top:438.50px;font-size:13px;color:#2e2e2e;-webkit-text-stroke:0.18px #2e2e2e;letter-spacing:0.004px;">Admin1</span>
<span class="t" style="left:2157.70px;top:438.50px;font-size:13px;color:#2e2e2e;-webkit-text-stroke:0.18px #2e2e2e;letter-spacing:-0.212px;">Local Manage Authentication</span>

</body></html>
